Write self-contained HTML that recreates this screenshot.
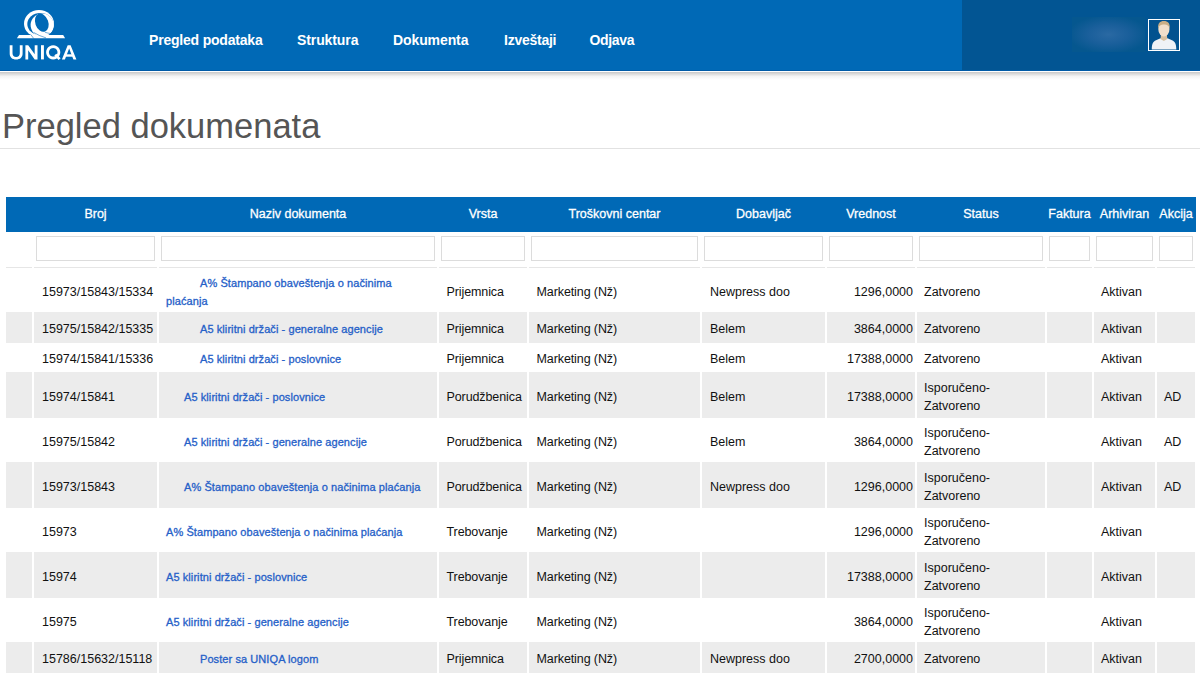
<!DOCTYPE html>
<html><head><meta charset="utf-8"><title>Pregled dokumenata</title>
<style>
*{box-sizing:border-box;margin:0;padding:0}
html,body{width:1200px;height:680px;overflow:hidden;background:#fff}
body{position:relative;font-family:"Liberation Sans",sans-serif;color:#000}
.a{position:absolute}
.nav{left:0;top:0;width:1200px;height:71px;background:#0069b6}
.navr{left:962px;top:0;width:238px;height:70px;background:#025593}
.navline{left:0;top:70px;width:1200px;height:1px;background:#005aa6}
.shadow{left:0;top:72px;width:1200px;height:8px;background:linear-gradient(#c8c8c8,#f4f4f4 55%,#fff)}
.ni{top:31px;font-size:14px;font-weight:bold;letter-spacing:-0.2px;color:#fff;white-space:nowrap;line-height:18px}
.title{left:2px;top:106px;font-size:34.5px;color:#555;white-space:nowrap;line-height:40px}
.hr{left:0;top:148px;width:1200px;height:1px;background:#e2e2e2}
.th{top:197px;height:35px;background:#0069b6}
.tht{top:205px;font-size:12.5px;-webkit-text-stroke:0.3px #fff;color:#fff;white-space:nowrap;line-height:18px;text-align:center}
.inp{top:236px;height:25px;border:1px solid #dcdcdc;background:#fff}
.fl{top:267px;height:1px;background:#e6e6e6}
.g{background:#ececec}
.t{font-size:12.5px;line-height:18px;white-space:nowrap;color:#111}
.l{font-size:11px;line-height:18px;white-space:nowrap;color:#2560c8;-webkit-text-stroke:0.3px #2560c8;letter-spacing:0.08px}
.r{text-align:right}
</style></head><body>

<div class="a nav"></div><div class="a navr"></div><div class="a navline"></div>
<div class="a" style="left:0;top:71px;width:1200px;height:1px;background:#fff"></div>
<div class="a shadow"></div>
<svg class="a" style="left:0;top:0" width="90" height="70" viewBox="0 0 90 70">
<ellipse cx="39" cy="23.7" rx="15" ry="13.6" fill="#fff"/>
<ellipse cx="40.3" cy="24" rx="13" ry="11.1" fill="#0069b6"/>
<ellipse cx="42.2" cy="25.1" rx="11.6" ry="11.6" fill="#fff"/>
<ellipse cx="41.8" cy="22.7" rx="6.5" ry="9.4" transform="rotate(-20 41.8 22.7)" fill="#0069b6"/>
<path d="M19 34.9 L63.2 34.9 L65.1 38.3 L16.9 38.3 Z" fill="#fff"/>
<g stroke="#0069b6" stroke-width="0.55" fill="none">
<path d="M44.9 32.2 Q50 34.2 63 34.4"/>
<path d="M34 32.6 Q38.5 35.6 46 37.9"/>
<path d="M30.6 34.4 L33.8 38.6"/>
</g>
<g fill="#fff">
<path d="M9.7 45.2 H12.5 V53.3 C12.5 55.8 13.9 56.9 16.15 56.9 C18.4 56.9 19.8 55.8 19.8 53.3 V45.2 H22.6 V53.5 C22.6 57.4 20 59.5 16.15 59.5 C12.3 59.5 9.7 57.4 9.7 53.5 Z"/>
<path d="M25.4 59.4 V45.2 H28.2 L34.7 54.3 V45.2 H37.5 V59.4 H34.7 L28.2 50.3 V59.4 Z"/>
<rect x="41" y="45.2" width="2.9" height="14.2"/>
<path fill-rule="evenodd" d="M53.2 45.2 A7.1 7.1 0 1 1 53.19 45.2 Z M53.2 48 A4.3 4.3 0 1 0 53.21 48 Z"/>
<path d="M54.3 55.6 L56.3 53.8 L60.6 58.2 L58.6 60 Z"/>
<path d="M61.9 59.4 L67.7 45.2 H70.6 L76.4 59.4 H73.4 L69.15 48.6 L64.9 59.4 Z"/>
<rect x="65.6" y="54.3" width="7.2" height="2.4"/>
</g>
</svg>
<div class="a ni" style="left:149px;letter-spacing:-0.2px">Pregled podataka</div>
<div class="a ni" style="left:297px;letter-spacing:-0.1px">Struktura</div>
<div class="a ni" style="left:393px;letter-spacing:-0.1px">Dokumenta</div>
<div class="a ni" style="left:504px;letter-spacing:-0.25px">Izveštaji</div>
<div class="a ni" style="left:589.5px;letter-spacing:-0.35px">Odjava</div>
<div class="a" style="left:1072px;top:17px;width:73px;height:35px;background:#05578f"></div>
<div class="a" style="left:1072px;top:17px;width:73px;height:35px;background:radial-gradient(ellipse 55% 55% at 50% 50%,#2a69a3 0%,#1a5f9b 50%,rgba(5,87,143,0) 100%)"></div>
<div class="a" style="left:1148px;top:19px;width:32px;height:32px;border:1.3px solid #fff;background:#02528f;overflow:hidden">
<svg width="32" height="32" viewBox="1148 19 32 32" style="position:absolute;left:-1.3px;top:-1.3px">
<path d="M1151.8 49.5 C1151.8 44 1153 41.5 1156 40.2 L1160.5 38.3 L1163.8 40 L1167.5 38.3 L1172 40.2 C1175 41.5 1176.3 44 1176.3 49.5 Z" fill="#f0f2f6"/>
<path d="M1161 34 L1166.8 34 L1167.3 39 L1163.8 41 L1160.5 39 Z" fill="#d8c0a0"/>
<ellipse cx="1163.9" cy="29" rx="5.6" ry="7.4" fill="#f1dfcb"/>
<path d="M1158.2 29 C1157.6 23 1160 21 1163.9 21 C1167.8 21 1170.3 23 1169.7 29 C1169 25.5 1167 24.6 1163.9 24.6 C1160.9 24.6 1159 25.5 1158.2 29 Z" fill="#c9ae86"/>
</svg></div>
<div class="a title">Pregled dokumenata</div><div class="a hr"></div>
<div class="a th" style="left:6px;width:1190px"></div>
<div class="a tht" style="left:34px;width:123px">Broj</div>
<div class="a tht" style="left:159px;width:278px">Naziv dokumenta</div>
<div class="a tht" style="left:439px;width:88px">Vrsta</div>
<div class="a tht" style="left:529px;width:171px">Troškovni centar</div>
<div class="a tht" style="left:702px;width:123px">Dobavljač</div>
<div class="a tht" style="left:827px;width:88px">Vrednost</div>
<div class="a tht" style="left:917px;width:128px">Status</div>
<div class="a tht" style="left:1047px;width:45px">Faktura</div>
<div class="a tht" style="left:1094px;width:61px">Arhiviran</div>
<div class="a tht" style="left:1157px;width:38px">Akcija</div>
<div class="a fl" style="left:6px;width:26px"></div>
<div class="a inp" style="left:36px;width:119px"></div>
<div class="a fl" style="left:34px;width:123px"></div>
<div class="a inp" style="left:161px;width:274px"></div>
<div class="a fl" style="left:159px;width:278px"></div>
<div class="a inp" style="left:441px;width:84px"></div>
<div class="a fl" style="left:439px;width:88px"></div>
<div class="a inp" style="left:531px;width:167px"></div>
<div class="a fl" style="left:529px;width:171px"></div>
<div class="a inp" style="left:704px;width:119px"></div>
<div class="a fl" style="left:702px;width:123px"></div>
<div class="a inp" style="left:829px;width:84px"></div>
<div class="a fl" style="left:827px;width:88px"></div>
<div class="a inp" style="left:919px;width:124px"></div>
<div class="a fl" style="left:917px;width:128px"></div>
<div class="a inp" style="left:1049px;width:41px"></div>
<div class="a fl" style="left:1047px;width:45px"></div>
<div class="a inp" style="left:1096px;width:57px"></div>
<div class="a fl" style="left:1094px;width:61px"></div>
<div class="a inp" style="left:1159px;width:34px"></div>
<div class="a fl" style="left:1157px;width:38px"></div>
<div class="a t" style="left:42px;top:282.7px">15973/15843/15334</div>
<div class="a l" style="left:166px;top:273.7px;width:271px;text-indent:34px;white-space:normal">A% Štampano obaveštenja o načinima<br>plaćanja</div>
<div class="a t" style="left:446.5px;top:282.7px;letter-spacing:-0.1px">Prijemnica</div>
<div class="a t" style="left:536.5px;top:282.7px;letter-spacing:-0.1px">Marketing (Nž)</div>
<div class="a t" style="left:710px;top:282.7px">Newpress doo</div>
<div class="a t r" style="left:827px;width:86px;top:282.7px">1296,0000</div>
<div class="a t" style="left:924px;top:282.7px">Zatvoreno</div>
<div class="a t" style="left:1101px;top:282.7px">Aktivan</div>
<div class="a g" style="left:6px;top:312px;width:26px;height:31px"></div>
<div class="a g" style="left:34px;top:312px;width:123px;height:31px"></div>
<div class="a g" style="left:159px;top:312px;width:278px;height:31px"></div>
<div class="a g" style="left:439px;top:312px;width:88px;height:31px"></div>
<div class="a g" style="left:529px;top:312px;width:171px;height:31px"></div>
<div class="a g" style="left:702px;top:312px;width:123px;height:31px"></div>
<div class="a g" style="left:827px;top:312px;width:88px;height:31px"></div>
<div class="a g" style="left:917px;top:312px;width:128px;height:31px"></div>
<div class="a g" style="left:1047px;top:312px;width:45px;height:31px"></div>
<div class="a g" style="left:1094px;top:312px;width:61px;height:31px"></div>
<div class="a g" style="left:1157px;top:312px;width:38px;height:31px"></div>
<div class="a t" style="left:42px;top:319.7px">15975/15842/15335</div>
<div class="a l" style="left:200px;top:319.7px">A5 kliritni držači - generalne agencije</div>
<div class="a t" style="left:446.5px;top:319.7px;letter-spacing:-0.1px">Prijemnica</div>
<div class="a t" style="left:536.5px;top:319.7px;letter-spacing:-0.1px">Marketing (Nž)</div>
<div class="a t" style="left:710px;top:319.7px">Belem</div>
<div class="a t r" style="left:827px;width:86px;top:319.7px">3864,0000</div>
<div class="a t" style="left:924px;top:319.7px">Zatvoreno</div>
<div class="a t" style="left:1101px;top:319.7px">Aktivan</div>
<div class="a t" style="left:42px;top:349.7px">15974/15841/15336</div>
<div class="a l" style="left:200px;top:349.7px">A5 kliritni držači - poslovnice</div>
<div class="a t" style="left:446.5px;top:349.7px;letter-spacing:-0.1px">Prijemnica</div>
<div class="a t" style="left:536.5px;top:349.7px;letter-spacing:-0.1px">Marketing (Nž)</div>
<div class="a t" style="left:710px;top:349.7px">Belem</div>
<div class="a t r" style="left:827px;width:86px;top:349.7px">17388,0000</div>
<div class="a t" style="left:924px;top:349.7px">Zatvoreno</div>
<div class="a t" style="left:1101px;top:349.7px">Aktivan</div>
<div class="a g" style="left:6px;top:372px;width:26px;height:46px"></div>
<div class="a g" style="left:34px;top:372px;width:123px;height:46px"></div>
<div class="a g" style="left:159px;top:372px;width:278px;height:46px"></div>
<div class="a g" style="left:439px;top:372px;width:88px;height:46px"></div>
<div class="a g" style="left:529px;top:372px;width:171px;height:46px"></div>
<div class="a g" style="left:702px;top:372px;width:123px;height:46px"></div>
<div class="a g" style="left:827px;top:372px;width:88px;height:46px"></div>
<div class="a g" style="left:917px;top:372px;width:128px;height:46px"></div>
<div class="a g" style="left:1047px;top:372px;width:45px;height:46px"></div>
<div class="a g" style="left:1094px;top:372px;width:61px;height:46px"></div>
<div class="a g" style="left:1157px;top:372px;width:38px;height:46px"></div>
<div class="a t" style="left:42px;top:387.7px">15974/15841</div>
<div class="a l" style="left:184px;top:387.7px">A5 kliritni držači - poslovnice</div>
<div class="a t" style="left:446.5px;top:387.7px;letter-spacing:-0.1px">Porudžbenica</div>
<div class="a t" style="left:536.5px;top:387.7px;letter-spacing:-0.1px">Marketing (Nž)</div>
<div class="a t" style="left:710px;top:387.7px">Belem</div>
<div class="a t r" style="left:827px;width:86px;top:387.7px">17388,0000</div>
<div class="a t" style="left:924px;top:378.7px">Isporučeno-<br>Zatvoreno</div>
<div class="a t" style="left:1101px;top:387.7px">Aktivan</div>
<div class="a t" style="left:1164px;top:387.7px">AD</div>
<div class="a t" style="left:42px;top:432.7px">15975/15842</div>
<div class="a l" style="left:184px;top:432.7px">A5 kliritni držači - generalne agencije</div>
<div class="a t" style="left:446.5px;top:432.7px;letter-spacing:-0.1px">Porudžbenica</div>
<div class="a t" style="left:536.5px;top:432.7px;letter-spacing:-0.1px">Marketing (Nž)</div>
<div class="a t" style="left:710px;top:432.7px">Belem</div>
<div class="a t r" style="left:827px;width:86px;top:432.7px">3864,0000</div>
<div class="a t" style="left:924px;top:423.7px">Isporučeno-<br>Zatvoreno</div>
<div class="a t" style="left:1101px;top:432.7px">Aktivan</div>
<div class="a t" style="left:1164px;top:432.7px">AD</div>
<div class="a g" style="left:6px;top:462px;width:26px;height:46px"></div>
<div class="a g" style="left:34px;top:462px;width:123px;height:46px"></div>
<div class="a g" style="left:159px;top:462px;width:278px;height:46px"></div>
<div class="a g" style="left:439px;top:462px;width:88px;height:46px"></div>
<div class="a g" style="left:529px;top:462px;width:171px;height:46px"></div>
<div class="a g" style="left:702px;top:462px;width:123px;height:46px"></div>
<div class="a g" style="left:827px;top:462px;width:88px;height:46px"></div>
<div class="a g" style="left:917px;top:462px;width:128px;height:46px"></div>
<div class="a g" style="left:1047px;top:462px;width:45px;height:46px"></div>
<div class="a g" style="left:1094px;top:462px;width:61px;height:46px"></div>
<div class="a g" style="left:1157px;top:462px;width:38px;height:46px"></div>
<div class="a t" style="left:42px;top:477.7px">15973/15843</div>
<div class="a l" style="left:184px;top:477.7px">A% Štampano obaveštenja o načinima plaćanja</div>
<div class="a t" style="left:446.5px;top:477.7px;letter-spacing:-0.1px">Porudžbenica</div>
<div class="a t" style="left:536.5px;top:477.7px;letter-spacing:-0.1px">Marketing (Nž)</div>
<div class="a t" style="left:710px;top:477.7px">Newpress doo</div>
<div class="a t r" style="left:827px;width:86px;top:477.7px">1296,0000</div>
<div class="a t" style="left:924px;top:468.7px">Isporučeno-<br>Zatvoreno</div>
<div class="a t" style="left:1101px;top:477.7px">Aktivan</div>
<div class="a t" style="left:1164px;top:477.7px">AD</div>
<div class="a t" style="left:42px;top:522.7px">15973</div>
<div class="a l" style="left:166px;top:522.7px">A% Štampano obaveštenja o načinima plaćanja</div>
<div class="a t" style="left:446.5px;top:522.7px;letter-spacing:-0.1px">Trebovanje</div>
<div class="a t" style="left:536.5px;top:522.7px;letter-spacing:-0.1px">Marketing (Nž)</div>
<div class="a t r" style="left:827px;width:86px;top:522.7px">1296,0000</div>
<div class="a t" style="left:924px;top:513.7px">Isporučeno-<br>Zatvoreno</div>
<div class="a t" style="left:1101px;top:522.7px">Aktivan</div>
<div class="a g" style="left:6px;top:552px;width:26px;height:46px"></div>
<div class="a g" style="left:34px;top:552px;width:123px;height:46px"></div>
<div class="a g" style="left:159px;top:552px;width:278px;height:46px"></div>
<div class="a g" style="left:439px;top:552px;width:88px;height:46px"></div>
<div class="a g" style="left:529px;top:552px;width:171px;height:46px"></div>
<div class="a g" style="left:702px;top:552px;width:123px;height:46px"></div>
<div class="a g" style="left:827px;top:552px;width:88px;height:46px"></div>
<div class="a g" style="left:917px;top:552px;width:128px;height:46px"></div>
<div class="a g" style="left:1047px;top:552px;width:45px;height:46px"></div>
<div class="a g" style="left:1094px;top:552px;width:61px;height:46px"></div>
<div class="a g" style="left:1157px;top:552px;width:38px;height:46px"></div>
<div class="a t" style="left:42px;top:567.7px">15974</div>
<div class="a l" style="left:166px;top:567.7px">A5 kliritni držači - poslovnice</div>
<div class="a t" style="left:446.5px;top:567.7px;letter-spacing:-0.1px">Trebovanje</div>
<div class="a t" style="left:536.5px;top:567.7px;letter-spacing:-0.1px">Marketing (Nž)</div>
<div class="a t r" style="left:827px;width:86px;top:567.7px">17388,0000</div>
<div class="a t" style="left:924px;top:558.7px">Isporučeno-<br>Zatvoreno</div>
<div class="a t" style="left:1101px;top:567.7px">Aktivan</div>
<div class="a t" style="left:42px;top:612.7px">15975</div>
<div class="a l" style="left:166px;top:612.7px">A5 kliritni držači - generalne agencije</div>
<div class="a t" style="left:446.5px;top:612.7px;letter-spacing:-0.1px">Trebovanje</div>
<div class="a t" style="left:536.5px;top:612.7px;letter-spacing:-0.1px">Marketing (Nž)</div>
<div class="a t r" style="left:827px;width:86px;top:612.7px">3864,0000</div>
<div class="a t" style="left:924px;top:603.7px">Isporučeno-<br>Zatvoreno</div>
<div class="a t" style="left:1101px;top:612.7px">Aktivan</div>
<div class="a g" style="left:6px;top:642px;width:26px;height:31px"></div>
<div class="a g" style="left:34px;top:642px;width:123px;height:31px"></div>
<div class="a g" style="left:159px;top:642px;width:278px;height:31px"></div>
<div class="a g" style="left:439px;top:642px;width:88px;height:31px"></div>
<div class="a g" style="left:529px;top:642px;width:171px;height:31px"></div>
<div class="a g" style="left:702px;top:642px;width:123px;height:31px"></div>
<div class="a g" style="left:827px;top:642px;width:88px;height:31px"></div>
<div class="a g" style="left:917px;top:642px;width:128px;height:31px"></div>
<div class="a g" style="left:1047px;top:642px;width:45px;height:31px"></div>
<div class="a g" style="left:1094px;top:642px;width:61px;height:31px"></div>
<div class="a g" style="left:1157px;top:642px;width:38px;height:31px"></div>
<div class="a t" style="left:42px;top:649.7px">15786/15632/15118</div>
<div class="a l" style="left:200px;top:649.7px">Poster sa UNIQA logom</div>
<div class="a t" style="left:446.5px;top:649.7px;letter-spacing:-0.1px">Prijemnica</div>
<div class="a t" style="left:536.5px;top:649.7px;letter-spacing:-0.1px">Marketing (Nž)</div>
<div class="a t" style="left:710px;top:649.7px">Newpress doo</div>
<div class="a t r" style="left:827px;width:86px;top:649.7px">2700,0000</div>
<div class="a t" style="left:924px;top:649.7px">Zatvoreno</div>
<div class="a t" style="left:1101px;top:649.7px">Aktivan</div>
</body></html>
